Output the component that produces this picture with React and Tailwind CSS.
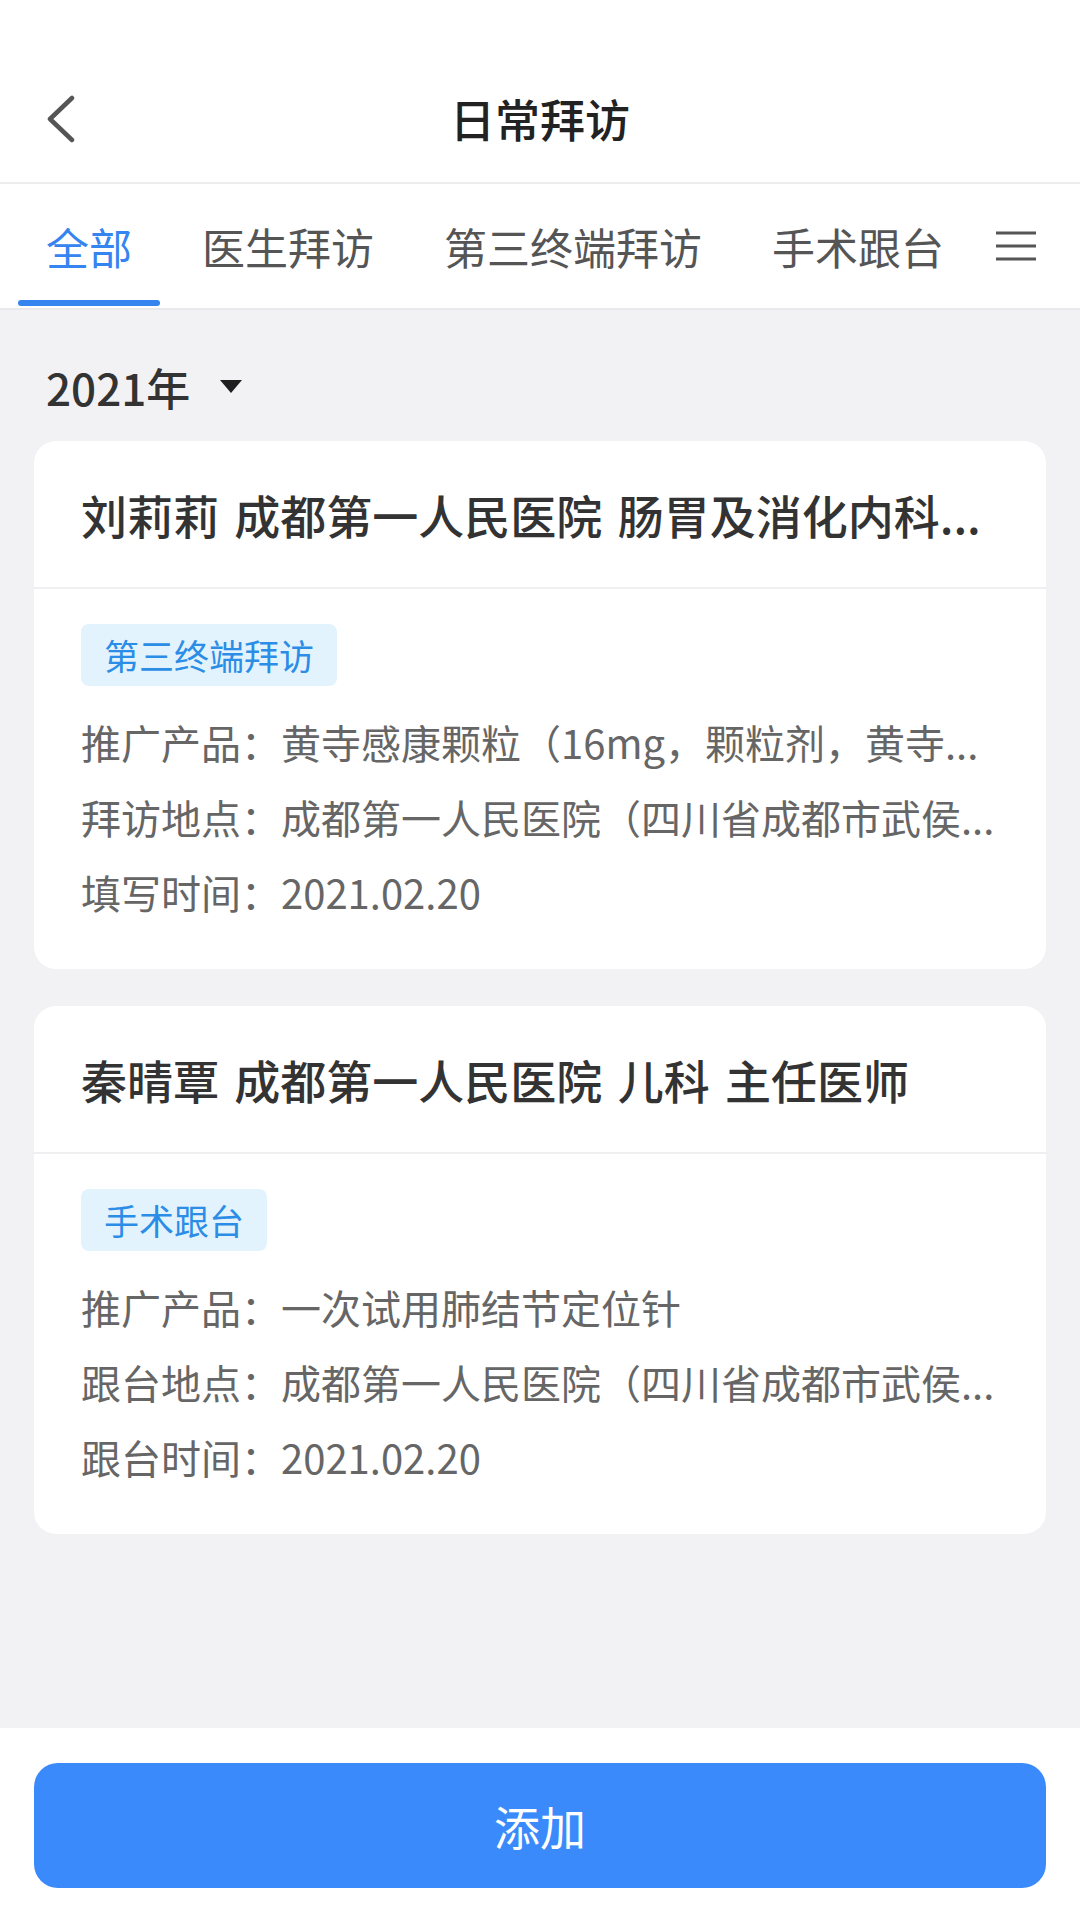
const visits = [
    {
        title: "刘莉莉 成都第一人民医院 肠胃及消化内科...",
        tag: "第三终端拜访",
        rows: [
            ["推广产品：", "黄寺感康颗粒（16mg，颗粒剂，黄寺..."],
            ["拜访地点：", "成都第一人民医院（四川省成都市武侯..."],
            ["填写时间：", "2021.02.20"],
        ],
    },
    {
        title: "秦晴覃 成都第一人民医院 儿科 主任医师",
        tag: "手术跟台",
        rows: [
            ["推广产品：", "一次试用肺结节定位针"],
            ["跟台地点：", "成都第一人民医院（四川省成都市武侯..."],
            ["跟台时间：", "2021.02.20"],
        ],
    },
];

const tabs = ["全部", "医生拜访", "第三终端拜访", "手术跟台"];

function VisitCard({ visit }) {
    return (
        <div className="bg-white rounded-[22px]">
            <div className="h-[148px] flex items-center px-[47px] border-b-2 border-[#efeff1]">
                <div className="text-[46px] leading-[64px] font-medium text-[#333333] whitespace-nowrap [word-spacing:5px]">
                    {visit.title}
                </div>
            </div>
            <div className="pt-[35px] pb-[40px] px-[47px]">
                <div className="inline-flex items-center h-[62px] px-[23px] rounded-[8px] bg-[#e3f3fd] text-[#2b8de6] text-[35px]">
                    {visit.tag}
                </div>
                <div className="mt-[18px]">
                    {visit.rows.map(([label, value]) => (
                        <div key={label} className="h-[75px] flex items-center text-[40px] text-[#666666] whitespace-nowrap">
                            <span>{label}</span>
                            <span>{value}</span>
                        </div>
                    ))}
                </div>
            </div>
        </div>
    );
}

export default function App() {
    return (
        <div className="w-[1080px] h-[1920px] flex flex-col bg-[#f2f2f4] font-['Noto_Sans_CJK_SC','Noto_Sans',sans-serif]">
            {/* Nav bar */}
            <div className="bg-white pt-[56px] border-b-2 border-[#ececee]">
                <div className="h-[126px] grid grid-cols-[140px_1fr_140px] items-center">
                    <div className="pl-[44px] flex items-center">
                        <svg width="32" height="48" viewBox="0 0 32 48" fill="none">
                            <polyline points="28,3 6,24 28,45" stroke="#555555" strokeWidth="4.5" strokeLinecap="round" strokeLinejoin="round" />
                        </svg>
                    </div>
                    <div className="text-center text-[45px] text-[#222222] font-medium">日常拜访</div>
                    <div />
                </div>
            </div>

            {/* Tabs */}
            <div className="bg-white h-[126px] flex items-stretch pl-[46px] pr-[42px] border-b-2 border-[#e9e9eb]">
                <div className="flex items-stretch gap-[70px]">
                    {tabs.map((t, i) => (
                        <div key={t} className={"relative flex items-center text-[43px] " + (i === 0 ? "text-[#3584ef]" : "text-[#555555]")}>
                            {t}
                            {i === 0 && (
                                <div className="absolute bottom-[2px] left-[-28px] right-[-28px] h-[6px] rounded-full bg-[#3584ef]" />
                            )}
                        </div>
                    ))}
                </div>
                <div className="ml-auto flex items-center">
                    <svg width="44" height="32" viewBox="0 0 44 32" fill="none">
                        <line x1="2" y1="3" x2="42" y2="3" stroke="#555555" strokeWidth="3" />
                        <line x1="2" y1="16" x2="42" y2="16" stroke="#555555" strokeWidth="3" />
                        <line x1="2" y1="29" x2="42" y2="29" stroke="#555555" strokeWidth="3" />
                    </svg>
                </div>
            </div>

            {/* Content */}
            <div className="flex-1 px-[34px]">
                <div className="pt-[52px] pb-[30px] pl-[12px] flex items-center h-[131px]">
                    <span className="text-[44px] leading-[48px] font-medium text-[#333333]">2021年</span>
                    <svg className="ml-[30px]" width="22" height="13" viewBox="0 0 22 13">
                        <polygon points="0,0 22,0 11,13" fill="#1f1f1f" />
                    </svg>
                </div>
                <div className="flex flex-col gap-[37px]">
                    {visits.map((v) => (
                        <VisitCard key={v.title} visit={v} />
                    ))}
                </div>
            </div>

            {/* Bottom action */}
            <div className="bg-white h-[192px] px-[34px] pt-[35px]">
                <button className="w-full h-[125px] rounded-[24px] bg-[#3a8afb] text-white text-[46px]">
                    添加
                </button>
            </div>
        </div>
    );
}
